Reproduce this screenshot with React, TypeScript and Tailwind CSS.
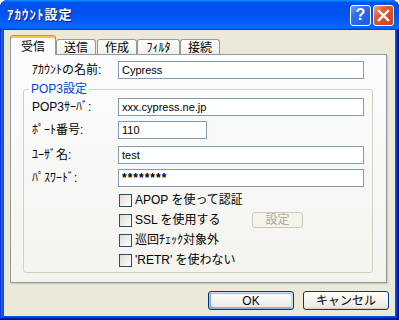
import React from 'react';

const font = "font-['Liberation_Sans','Noto_Sans_CJK_JP',sans-serif]";

const tabs = [
  { label: '受信', w: 'w-[46px]', gap: '' },
  { label: '送信', w: 'w-[40px]', gap: '' },
  { label: '作成', w: 'w-[40px]', gap: 'ml-[1px]' },
  { label: 'ﾌｨﾙﾀ', w: 'w-[43px]', gap: '' },
  { label: '接続', w: 'w-[40px]', gap: '' },
];

function Field({ label, value, width, className = '' }: { label: string; value: string; width: string; className?: string }) {
  return (
    <div className={`flex h-[18px] items-center ${className}`}>
      <span className="w-[86px] text-[12px] leading-[14px]">{label}</span>
      <div className={`${width} flex h-[18px] items-center border border-[#7f9db9] bg-white pl-[3px] text-[11px] leading-[14px]`}>
        {value}
      </div>
    </div>
  );
}

function Check({ label, labelWidth, children }: { label: string; labelWidth?: string; children?: React.ReactNode }) {
  return (
    <div className="flex h-[20px] items-center">
      <div className="mr-[3px] h-[13px] w-[13px] border border-[#1c5180] bg-[linear-gradient(135deg,#dcdcd7,#fff)]" />
      <span className={`${labelWidth ?? ''} text-[12px] leading-[14px]`}>{label}</span>
      {children}
    </div>
  );
}

export default function App() {
  return (
    <div className={`h-[320px] w-[399px] bg-white ${font}`}>
      <div className="flex h-full flex-col rounded-t-[8px] bg-[#0054e3] shadow-[inset_-1px_-1px_#00138c,inset_1px_1px_#0831d9,inset_-2px_-2px_#001ea0,inset_2px_2px_#166aee,inset_-3px_-3px_#003bda,inset_3px_3px_#0855dd]">
        {/* Title bar */}
        <div className="flex h-[30px] items-center rounded-t-[8px] bg-[linear-gradient(180deg,#0997ff,#0053ee_8%,#0050ee_40%,#06f_88%,#06f_93%,#005bff_95%,#003dd7_96%,#003dd7)] pl-[7px] pr-[5px]">
          <span className="flex-1 text-[13px] font-bold leading-[16px] tracking-[1px] text-white [text-shadow:1px_1px_#0f1089]">
            ｱｶｳﾝﾄ設定
          </span>
          <div className="flex gap-[2px]">
            <div className="flex h-[21px] w-[21px] items-center justify-center rounded-[3px] border border-white bg-[linear-gradient(135deg,#6ea0f8,#2f6ff0_35%,#1a5ae4)] text-[16px] font-bold leading-[16px] text-white">
              ?
            </div>
            <div className="flex h-[21px] w-[21px] items-center justify-center rounded-[3px] border border-white bg-[linear-gradient(135deg,#f4a183,#e35a31_35%,#cb4117)]">
              <svg width="13" height="13" viewBox="0 0 13 13">
                <path d="M2 2 L11 11 M11 2 L2 11" stroke="white" strokeWidth="2.4" strokeLinecap="square" />
              </svg>
            </div>
          </div>
        </div>

        {/* Body */}
        <div className="mx-[4px] mb-[4px] flex flex-1 flex-col bg-[#ece9d8] pt-[5px]">
          {/* Tabs */}
          <div className="flex h-[19px] items-end pl-[6px]">
            {tabs.map((t, i) =>
              i === 0 ? (
                <div
                  key={t.label}
                  className={`relative z-10 -mb-px flex h-[20px] ${t.w} items-center justify-center rounded-t-[3px] border-x border-t border-[#919b9c] border-t-[#e68b2c] bg-[#fcfcfe] pt-[2px] text-[12px] leading-[14px] shadow-[inset_0_2px_#ffc83c]`}
                >
                  {t.label}
                </div>
              ) : (
                <div
                  key={t.label}
                  className={`flex h-[15px] ${t.w} ${t.gap} items-center justify-center rounded-t-[3px] border-x border-t border-[#919b9c] bg-[linear-gradient(180deg,#fff,#fafaf9_26%,#f0f0ea_95%,#ecebe5)] pt-[2px] text-[12px] leading-[14px]`}
                >
                  {t.label}
                </div>
              )
            )}
          </div>

          {/* Panel */}
          <div className="ml-[6px] flex h-[229px] w-[377px] flex-col border border-[#919b9c] bg-[linear-gradient(180deg,#fcfcfe,#f4f3ee)] shadow-[1px_1px_0_#d0cebf,2px_2px_0_#e3e0d2]">
            <Field label="ｱｶｳﾝﾄの名前:" value="Cypress" width="w-[246px]" className="mt-[6px] pl-[21px]" />

            <fieldset className="mt-[3px] ml-[12px] w-[350px] rounded-[3px] border border-[#d0d0bf]">
              <legend className="ml-[5px] px-[2px] text-[12px] leading-[14px] text-[#0046d5]">POP3設定</legend>
              <div className="flex flex-col pb-[2px] pl-[8px] pt-[2px]">
                <Field label="POP3ｻｰﾊﾞ:" value="xxx.cypress.ne.jp" width="w-[246px]" />
                <Field label="ﾎﾟｰﾄ番号:" value="110" width="w-[89px]" className="mt-[5px]" />
                <Field label="ﾕｰｻﾞ名:" value="test" width="w-[246px]" className="mt-[7px]" />
                <div className="mt-[5px] flex h-[18px] items-center">
                  <span className="w-[86px] text-[12px] leading-[14px]">ﾊﾟｽﾜｰﾄﾞ:</span>
                  <div className="flex h-[18px] w-[246px] items-center border border-[#7f9db9] bg-white pl-[3px] text-[12px] font-bold leading-[14px] tracking-[1px]">
                    ********
                  </div>
                </div>
                <div className="mt-[3px] flex flex-col pl-[87px]">
                  <Check label="APOP を使って認証" />
                  <Check label="SSL を使用する" labelWidth="w-[117px]">
                    <div className="flex h-[16px] w-[51px] items-center justify-center rounded-[3px] border border-[#c9c7ba] bg-[#f5f4ea] text-[12px] leading-[14px] text-[#aca899]">
                      設定
                    </div>
                  </Check>
                  <Check label="巡回ﾁｪｯｸ対象外" />
                  <Check label="'RETR' を使わない" />
                </div>
              </div>
            </fieldset>
          </div>

          {/* Buttons */}
          <div className="mt-[8px] flex justify-end gap-[9px] pr-[6px]">
            <div className="flex h-[19px] w-[86px] items-center justify-center rounded-[3px] border border-[#003c74] bg-[linear-gradient(180deg,#fff,#ecebe6_86%,#d6d0c5)] text-[12px] leading-[14px] shadow-[inset_-1px_1px_#cee7ff,inset_1px_2px_#98b8ea,inset_-2px_2px_#bcd4f6,inset_1px_-1px_#89ade4,inset_2px_-2px_#89ade4]">
              OK
            </div>
            <div className="flex h-[19px] w-[86px] items-center justify-center rounded-[3px] border border-[#003c74] bg-[linear-gradient(180deg,#fff,#ecebe6_86%,#d6d0c5)] text-[12px] leading-[14px]">
              キャンセル
            </div>
          </div>
        </div>
      </div>
    </div>
  );
}
